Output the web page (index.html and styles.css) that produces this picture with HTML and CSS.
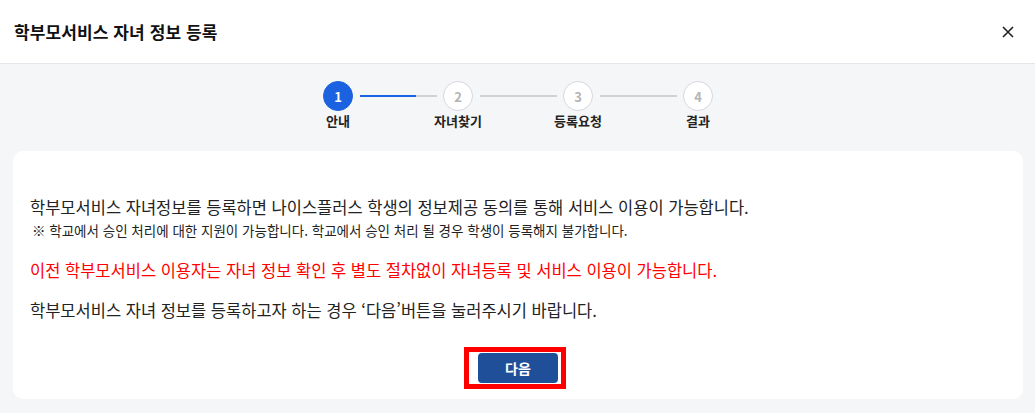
FILE: index.html
```html
<!DOCTYPE html>
<html lang="ko">
  <head>
    <meta charset="UTF-8" />
    <meta name="viewport" content="width=device-width, initial-scale=1.0"/>
    <title>학부모서비스 자녀 정보 등록</title>
    <link rel="stylesheet" href="styles.css">
  </head>
  <body>
    <div class="modal">
      <!-- 상단 헤더 -->
      <div class="modal-header">
        <h1>학부모서비스 자녀 정보 등록</h1>
        <span class="close-button" title="닫기">
          <svg width="12" height="12" viewBox="0 0 12 12">
            <path d="M1 1 L11 11 M11 1 L1 11" stroke="#222" stroke-width="1.6" fill="none"/>
          </svg>
        </span>
      </div>

      <div class="modal-body">
        <!-- 단계 표시 -->
        <div class="steps">
          <div class="step active">
            <span class="step-num">1</span>
            <span class="step-label">안내</span>
          </div>
          <div class="step-line half"></div>
          <div class="step">
            <span class="step-num">2</span>
            <span class="step-label">자녀찾기</span>
          </div>
          <div class="step-line"></div>
          <div class="step">
            <span class="step-num">3</span>
            <span class="step-label">등록요청</span>
          </div>
          <div class="step-line"></div>
          <div class="step">
            <span class="step-num">4</span>
            <span class="step-label">결과</span>
          </div>
        </div>

        <div class="card">
          <p class="text">학부모서비스 자녀정보를 등록하면 나이스플러스 학생의 정보제공 동의를 통해 서비스 이용이 가능합니다.</p>
          <p class="note">※ 학교에서 승인 처리에 대한 지원이 가능합니다. 학교에서 승인 처리 될 경우 학생이 등록해지 불가합니다.</p>
          <p class="text warn">이전 학부모서비스 이용자는 자녀 정보 확인 후 별도 절차없이 자녀등록 및 서비스 이용이 가능합니다.</p>
          <p class="text guide">학부모서비스 자녀 정보를 등록하고자 하는 경우 ‘다음’버튼을 눌러주시기 바랍니다.</p>
          <div class="actions">
            <div class="highlight">
              <button class="btn-next" type="button">다음</button>
            </div>
          </div>
        </div>
      </div>
    </div>
  </body>
</html>
```

FILE: styles.css
```css
body {
  font-family: "Noto Sans CJK KR", "Noto Sans", sans-serif;
  background-color: #fff;
  color: #222;
  margin: 0;
  padding: 0;
  overflow: hidden;
}

.modal {
  width: 1035px;
  height: 413px;
  display: flex;
  flex-direction: column;
}

/* ----------- HEADER ----------- */
.modal-header {
  display: flex;
  align-items: center;
  justify-content: space-between;
  height: 63px;
  padding: 0 21px 0 14px;
  background-color: #fff;
  border-bottom: 1px solid #e3e7ec;
}
.modal-header h1 {
  margin: 0;
  font-size: 17px;
  font-weight: bold;
  color: #111;
  letter-spacing: 0.1px;
}
.close-button {
  display: flex;
  cursor: pointer;
}

.modal-body {
  flex-grow: 1;
  background-color: #f5f6f8;
  padding: 17px 12px 14px 13px;
  display: flex;
  flex-direction: column;
}

/* ----------- STEPS ----------- */
.steps {
  display: flex;
  justify-content: center;
  align-items: flex-start;
  height: 70px;
  flex-shrink: 0;
}
.step {
  width: 30px;
  display: flex;
  flex-direction: column;
  align-items: center;
}
.step-num {
  box-sizing: border-box;
  width: 30px;
  height: 30px;
  border-radius: 50%;
  border: 1px solid #d6d7db;
  background-color: #fff;
  color: #b4b4b8;
  font-size: 13px;
  font-weight: bold;
  display: flex;
  align-items: center;
  justify-content: center;
}
.step.active .step-num {
  background-color: #1a62e0;
  border-color: #1a62e0;
  color: #fff;
}
.step-label {
  margin-top: 0;
  white-space: nowrap;
  font-size: 13px;
  font-weight: bold;
  color: #222;
  line-height: 20px;
}
.step-line {
  width: 77px;
  height: 2px;
  margin: 14px 6px 0 7px;
  background-color: #d0d1d5;
}
.step-line.half {
  background: linear-gradient(to right, #1a62e0 0, #1a62e0 56px, #d0d1d5 56px);
}

/* ----------- CARD ----------- */
.card {
  flex-grow: 1;
  background-color: #fff;
  border-radius: 10px;
  padding: 44px 17px 10px;
  display: flex;
  flex-direction: column;
}
.card p {
  margin: 0;
  white-space: nowrap;
}
.text {
  font-size: 16.5px;
  line-height: 24px;
  color: #222;
}
.note {
  margin-top: 2px !important;
  font-size: 13.5px;
  line-height: 18px;
  color: #222;
  padding-left: 2px;
}
.warn {
  margin-top: 19px !important;
  color: #ff0000;
}
.guide {
  margin-top: 16px !important;
}

.actions {
  display: flex;
  justify-content: center;
  margin-top: 25px;
}
.highlight {
  border: 5px solid #ff0000;
  padding: 1px 3px 1px 9px;
  margin-right: 6px;
  display: flex;
}
.btn-next {
  width: 80px;
  height: 30px;
  border: none;
  border-radius: 4px;
  background-color: #1f4f99;
  color: #fff;
  font-family: inherit;
  font-size: 14px;
  font-weight: bold;
  cursor: pointer;
}
```
